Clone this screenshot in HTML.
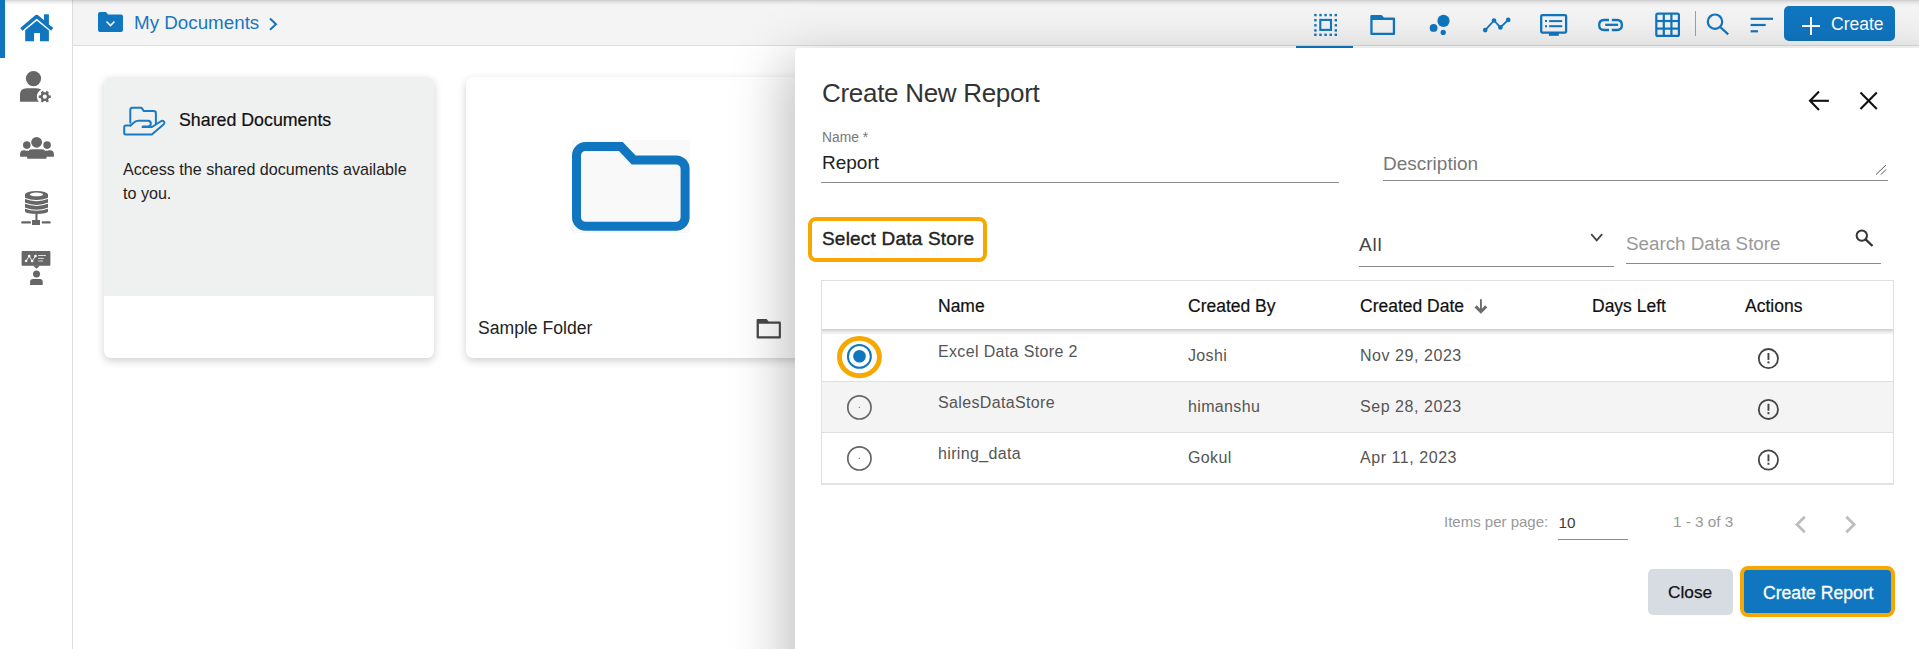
<!DOCTYPE html>
<html><head><meta charset="utf-8">
<style>
*{box-sizing:border-box;margin:0;padding:0}
html,body{width:1919px;height:649px;overflow:hidden;background:#fff;font-family:"Liberation Sans",sans-serif;position:relative}
.abs{position:absolute}
.t{position:absolute;white-space:nowrap;line-height:1}
svg{position:absolute;overflow:visible}
#side{left:0;top:0;width:73px;height:649px;background:#fff;border-right:1px solid #dcdcdc}
#topbar{left:73px;top:0;width:1846px;height:46px;background:#f4f4f4;border-bottom:1px solid #dddddd}
#topshadow{left:5px;top:0;width:1914px;height:6px;background:linear-gradient(rgba(0,0,0,.17),rgba(0,0,0,.08) 30%,rgba(0,0,0,.02) 70%,rgba(0,0,0,0))}
.card{position:absolute;border-radius:7px;box-shadow:0 3px 9px rgba(0,0,0,.19);overflow:hidden;background:#fff}
#panel{left:795px;top:48px;width:1184px;height:700px;background:#fff;border-top-left-radius:4px;box-shadow:-22px 0 50px -12px rgba(0,0,0,.25)}
.hd{font-size:17.5px;color:#111;-webkit-text-stroke:0.2px #111}
.cell{font-size:16px;color:#555;letter-spacing:0.35px}
</style></head><body>
<!-- sidebar -->
<div class="abs" id="side"></div>
<div class="abs" style="left:0;top:0;width:5px;height:58px;background:#0f75bc"></div>
<svg style="left:0;top:0" width="73" height="300" viewBox="0 0 73 300">
  <!-- home -->
  <g fill="#1076c0">
    <polyline points="21.3,29.4 36.75,16.4 52.2,29.4" fill="none" stroke="#1076c0" stroke-width="3.4" stroke-linejoin="round"/>
    <rect x="44" y="14.3" width="4.9" height="10"/>
    <path d="M25.2,30.3 L36.75,20.7 L48.9,30.6 V41.3 H40 V32.9 H34.1 V41.3 H25.2 Z"/>
  </g>
  <!-- user gear -->
  <g fill="#666">
    <circle cx="33.5" cy="78.6" r="7.6"/>
    <path d="M20,101.8 V94.5 Q20,88.2 27,88.2 H36 Q40,88.2 42,90 V101.8 Z"/>
    <circle cx="44.8" cy="96.7" r="7.9" fill="#fff"/>
    <circle cx="44.8" cy="96.7" r="4.4"/>
    <g stroke="#666" stroke-width="2.6">
      <line x1="38.8" y1="96.7" x2="50.8" y2="96.7"/>
      <line x1="41.8" y1="91.5" x2="47.8" y2="101.9"/>
      <line x1="47.8" y1="91.5" x2="41.8" y2="101.9"/>
    </g>
    <circle cx="44.8" cy="96.7" r="2.1" fill="#fff"/>
  </g>
  <!-- group -->
  <g fill="#666">
    <path d="M20.1,156.7 V154 Q20.1,150.2 24,150.2 H50 Q53.9,150.2 53.9,154 V156.7 H46.3 V158.6 H27.4 V156.7 Z"/>
    <path d="M27.4,158.6 V154.5 Q27.4,149.3 32.5,149.3 H41.2 Q46.3,149.3 46.3,154.5 V158.6 Z"/>
    <path d="M25.5,150.4 Q27.4,149.6 29,150.6" fill="none" stroke="#fff" stroke-width="0.9"/>
    <path d="M48.2,150.4 Q46.3,149.6 44.7,150.6" fill="none" stroke="#fff" stroke-width="0.9"/>
    <circle cx="26.8" cy="145.1" r="4.2" fill="#fff"/>
    <circle cx="47.1" cy="145.1" r="4.2" fill="#fff"/>
    <circle cx="36.6" cy="142.3" r="5.9" fill="#fff"/>
    <circle cx="36.6" cy="142.3" r="5.4"/>
    <circle cx="26.8" cy="145.1" r="3.8"/>
    <circle cx="47.1" cy="145.1" r="3.8"/>
  </g>
  <!-- database -->
  <g fill="#666">
    <ellipse cx="36.5" cy="194.4" rx="11.5" ry="3.5"/>
    <rect x="25" y="194.4" width="23" height="17"/>
    <ellipse cx="36.5" cy="211.4" rx="11.5" ry="2.7"/>
    <rect x="35.4" y="214" width="2.1" height="6.5"/>
    <rect x="32" y="220" width="8" height="5" />
    <rect x="21.2" y="221.2" width="9.8" height="2.4" rx="1.2"/>
    <rect x="41.7" y="221.2" width="9" height="2.4" rx="1.2"/>
  </g>
  <g fill="none" stroke="#fff" stroke-width="1.1">
    <path d="M24.5,198.3 Q36.5,203 48.5,198.3"/>
    <path d="M24.5,203.1 Q36.5,207.9 48.5,203.1"/>
    <path d="M24.5,207.9 Q36.5,212.7 48.5,207.9"/>
  </g>
  <ellipse cx="36.5" cy="194.4" rx="6.6" ry="1.8" fill="#fff"/>
  <!-- presenter -->
  <g fill="#666">
    <rect x="21.6" y="251.1" width="28.8" height="14.7" rx="1"/>
    <path d="M33,265.5 L36.5,268.8 L40,265.5 Z"/>
    <circle cx="36.5" cy="274.1" r="3.5"/>
    <path d="M30.1,285 V281.5 Q30.1,279 33,279 H40 Q42.7,279 42.7,281.5 V285 Z"/>
  </g>
  <g stroke="#fff" fill="#fff">
    <polyline points="26.1,261 29.2,256.1 32.2,261 35.5,256.1" fill="none" stroke-width="0.9"/>
    <circle cx="26.1" cy="261" r="1.3" stroke="none"/>
    <circle cx="29.2" cy="256.1" r="1.3" stroke="none"/>
    <circle cx="32.2" cy="261" r="1.3" stroke="none"/>
    <circle cx="35.5" cy="256.1" r="1.3" stroke="none"/>
    <line x1="38.2" y1="255.5" x2="45.9" y2="255.5" stroke-width="0.8"/>
    <line x1="38.2" y1="258.4" x2="43.8" y2="258.4" stroke-width="0.8"/>
    <line x1="38.2" y1="261" x2="43.1" y2="261" stroke-width="1.3" stroke="#bbb"/>
  </g>
</svg>

<!-- top bar -->
<div class="abs" id="topbar"></div>
<div class="abs" id="topshadow"></div>
<svg style="left:0;top:0" width="300" height="46">
  <path d="M98,14 Q98,12 100,12 H106 L108,14.5 H121 Q123,14.5 123,16.5 V30 Q123,32 121,32 H100 Q98,32 98,30 Z" fill="#1076c0"/>
  <polyline points="106.5,21.5 110.5,25.5 114.5,21.5" fill="none" stroke="#fff" stroke-width="1.6"/>
  <polyline points="270,18.5 276,24.2 270,29.8" fill="none" stroke="#1a73b8" stroke-width="2"/>
</svg>
<div class="t" style="left:134px;top:12.5px;font-size:18.8px;color:#1976c2;line-height:20px">My Documents</div>

<svg style="left:0;top:0" width="1919" height="50">
  <g fill="#1076c0" stroke="none">
    <!-- dashed select -->
    <g><rect x="1314.2" y="13.9" width="2.4" height="2.4"/><rect x="1314.2" y="33.6" width="2.4" height="2.4"/><rect x="1319.3" y="13.9" width="2.4" height="2.4"/><rect x="1319.3" y="33.6" width="2.4" height="2.4"/><rect x="1324.4" y="13.9" width="2.4" height="2.4"/><rect x="1324.4" y="33.6" width="2.4" height="2.4"/><rect x="1329.5" y="13.9" width="2.4" height="2.4"/><rect x="1329.5" y="33.6" width="2.4" height="2.4"/><rect x="1334.6" y="13.9" width="2.4" height="2.4"/><rect x="1334.6" y="33.6" width="2.4" height="2.4"/><rect x="1314.2" y="19.0" width="2.4" height="2.4"/><rect x="1334.6" y="19.0" width="2.4" height="2.4"/><rect x="1314.2" y="24.1" width="2.4" height="2.4"/><rect x="1334.6" y="24.1" width="2.4" height="2.4"/><rect x="1314.2" y="29.2" width="2.4" height="2.4"/><rect x="1334.6" y="29.2" width="2.4" height="2.4"/></g>
  </g>
  <g fill="none" stroke="#1076c0">
    <rect x="1320.3" y="19.9" width="10.7" height="10" stroke-width="2.1"/>
    <!-- folder -->
    <path d="M1371.4,14.9 H1381.6 L1384,17.5 H1393.9 Q1395.1,17.5 1395.1,18.7 V33.8 Q1395.1,35 1393.9,35 H1371.5 Q1370.3,35 1370.3,33.8 V16 Q1370.3,14.9 1371.4,14.9 Z M1372.6,20.1 V32.7 H1392.8 V20.1 Z" fill="#1076c0" fill-rule="evenodd" stroke="none"/>
    <!-- line chart -->
    <polyline points="1485.2,30.1 1494,20.5 1500.4,27.4 1508.2,19.9" stroke-width="1.8"/>
    <!-- monitor -->
    <rect x="1541.2" y="15.1" width="24.9" height="17.5" rx="1" stroke-width="2.3"/>
    <line x1="1549.1" y1="21.1" x2="1562.2" y2="21.1" stroke-width="2"/>
    <line x1="1549.1" y1="26.2" x2="1562.2" y2="26.2" stroke-width="2"/>
    <line x1="1545" y1="21.1" x2="1547" y2="21.1" stroke-width="2"/>
    <line x1="1545" y1="26.2" x2="1547" y2="26.2" stroke-width="2"/>
    <!-- link -->
    <path d="M1609,20 H1604 Q1599.2,20 1599.2,25 Q1599.2,30 1604,30 H1609" stroke-width="2.3"/>
    <path d="M1611.8,20 H1617 Q1621.9,20 1621.9,25 Q1621.9,30 1617,30 H1611.8" stroke-width="2.3"/>
    <line x1="1605.2" y1="24.8" x2="1618.1" y2="24.8" stroke-width="2.3"/>
    <!-- grid -->
    <rect x="1656.3" y="13.7" width="22.6" height="22.2" rx="1.5" stroke-width="2.2"/>
    <line x1="1663.8" y1="13.7" x2="1663.8" y2="35.9" stroke-width="2.2"/>
    <line x1="1671.4" y1="13.7" x2="1671.4" y2="35.9" stroke-width="2.2"/>
    <line x1="1656.3" y1="21" x2="1678.9" y2="21" stroke-width="2.2"/>
    <line x1="1656.3" y1="28.6" x2="1678.9" y2="28.6" stroke-width="2.2"/>
    <!-- search -->
    <circle cx="1715" cy="21.7" r="7.2" stroke-width="2.2"/>
    <line x1="1720" y1="26.8" x2="1728.2" y2="34.4" stroke-width="2.2"/>
    <!-- filter -->
    <line x1="1750.6" y1="18.8" x2="1773" y2="18.8" stroke-width="2.2"/>
    <line x1="1750.6" y1="25" x2="1765.7" y2="25" stroke-width="2.2"/>
    <line x1="1750.6" y1="31.3" x2="1758" y2="31.3" stroke-width="2.2"/>
  </g>
  <g fill="#1076c0">
    <circle cx="1443.5" cy="20.9" r="6.1"/>
    <circle cx="1433.6" cy="27.9" r="3.9"/>
    <circle cx="1443.2" cy="32.4" r="2.6"/>
    <circle cx="1485.2" cy="30.1" r="2.3"/>
    <circle cx="1494" cy="20.5" r="2.3"/>
    <circle cx="1500.4" cy="27.4" r="2.3"/>
    <circle cx="1508.2" cy="19.9" r="2.3"/>
    <rect x="1548.9" y="33" width="9.9" height="2.8"/>
  </g>
  <line x1="1695.5" y1="11" x2="1695.5" y2="36" stroke="#a0a0a0" stroke-width="1"/>
  <rect x="1296" y="46" width="57" height="3" fill="#1076c0"/>
</svg>
<div class="abs" style="left:1784px;top:6px;width:111px;height:35px;background:#1076c0;border-radius:5px"></div>
<svg style="left:0;top:0" width="1919" height="50">
  <line x1="1811" y1="17" x2="1811" y2="35" stroke="#fff" stroke-width="2"/>
  <line x1="1802" y1="26" x2="1820" y2="26" stroke="#fff" stroke-width="2"/>
</svg>
<div class="t" style="left:1831px;top:15px;font-size:17.5px;color:#fff;line-height:18px">Create</div>

<!-- cards -->
<div class="card" style="left:104px;top:77px;width:330px;height:281px">
  <div class="abs" style="left:0;top:0;width:330px;height:219px;background:#eff0f0"></div>
</div>
<svg style="left:0;top:0" width="200" height="140">
  <g fill="none" stroke="#1a7ac4" stroke-width="2" stroke-linejoin="round" stroke-linecap="round">
    <path d="M130.3,122.8 V110 Q130.3,107.7 132.6,107.7 H141.4 L143.9,111.1 H153.6 Q155.9,111.1 155.9,113.4 V123.4"/>
    <path d="M130.5,125.5 H125.5 Q124.2,125.5 124.2,127 V133 Q124.2,134.5 125.7,134.5 H151.8 L163.5,124.5 Q165.5,122.5 163.2,121 Q162,120.5 160.5,121.5 L152,127 H142.5"/>
    <path d="M130.5,125.5 L134,122.5 Q136,120.8 138.5,120.8 H148 Q150.8,120.8 150.8,123.5 Q150.8,126.5 148,126.5 H143"/>
  </g>
</svg>
<div class="t" style="left:179px;top:111px;font-size:17.8px;color:#111;line-height:18px;-webkit-text-stroke:0.2px #111">Shared Documents</div>
<div class="t" style="left:123px;top:157px;font-size:16.1px;color:#222;line-height:24px;white-space:normal;width:300px">Access the shared documents available to you.</div>

<div class="card" style="left:466px;top:77px;width:340px;height:281px">
  <div class="abs" style="left:106px;top:63px;width:118px;height:93px;background:#f9f9f9"></div>
</div>
<svg style="left:0;top:0" width="800" height="360">
  <path d="M576.5,155.5 A9,9 0 0 1 585.5,146.5 H620.8 L633.6,159.9 H676.1 A9,9 0 0 1 685.1,168.9 V217.3 A9,9 0 0 1 676.1,226.3 H585.5 A9,9 0 0 1 576.5,217.3 Z" fill="none" stroke="#1076c0" stroke-width="9" stroke-linejoin="miter"/>
  <path d="M756.6,320 Q756.6,318.9 757.7,318.9 H766.6 L768.7,321.6 H779.8 Q780.9,321.6 780.9,322.7 V337.5 Q780.9,338.6 779.8,338.6 H757.7 Q756.6,338.6 756.6,337.5 Z M758.9,323.8 V336.2 H778.8 V323.8 Z" fill="#4a4a4a" fill-rule="evenodd"/>
</svg>
<div class="t" style="left:478px;top:319px;font-size:17.6px;color:#222;line-height:18px">Sample Folder</div>

<!-- panel -->
<div class="abs" id="panel"></div>
<div class="t" style="left:822px;top:79.5px;font-size:26px;color:#333;line-height:26px;letter-spacing:-0.3px">Create New Report</div>
<svg style="left:0;top:0" width="1919" height="649">
  <g fill="none" stroke="#111" stroke-width="2.1">
    <line x1="1810" y1="100.8" x2="1828.9" y2="100.8"/>
    <polyline points="1819,91.5 1810,100.8 1819,110.1"/>
    <line x1="1860.5" y1="92.5" x2="1876.8" y2="109"/>
    <line x1="1876.8" y1="92.5" x2="1860.5" y2="109"/>
  </g>
</svg>
<div class="t" style="left:822px;top:131px;font-size:13.8px;color:#777;line-height:14px">Name *</div>
<div class="t" style="left:822px;top:153px;font-size:19px;color:#222;line-height:19px">Report</div>
<div class="abs" style="left:821px;top:182px;width:518px;height:1px;background:#8a8a8a"></div>
<div class="t" style="left:1383px;top:154px;font-size:19px;color:#777;line-height:19px">Description</div>
<div class="abs" style="left:1383px;top:180px;width:505px;height:1px;background:#8a8a8a"></div>
<svg style="left:0;top:0" width="1919" height="649">
  <g stroke="#555" stroke-width="1">
    <line x1="1876" y1="174.5" x2="1886" y2="165"/>
    <line x1="1881" y1="174.5" x2="1886" y2="169.5"/>
  </g>
</svg>

<div class="abs" style="left:808px;top:217px;width:179px;height:45px;border:4px solid #f6a800;border-radius:8px"></div>
<div class="t" style="left:822px;top:229px;font-size:19px;color:#222;line-height:19px;-webkit-text-stroke:0.4px #222;letter-spacing:0.2px">Select Data Store</div>

<div class="t" style="left:1359px;top:235px;font-size:19px;color:#444;line-height:19px;letter-spacing:0.8px">All</div>
<div class="abs" style="left:1359px;top:266px;width:255px;height:1px;background:#8a8a8a"></div>
<svg style="left:0;top:0" width="1919" height="649">
  <polyline points="1591.2,234.2 1596.7,240.3 1602.2,234.2" fill="none" stroke="#444" stroke-width="1.8"/>
  <circle cx="1861.8" cy="235.6" r="5.2" fill="none" stroke="#333" stroke-width="2"/>
  <line x1="1865.6" y1="239.4" x2="1872.5" y2="246" stroke="#333" stroke-width="2.4"/>
</svg>
<div class="t" style="left:1626px;top:233.5px;font-size:18.8px;color:#999;line-height:19px">Search Data Store</div>
<div class="abs" style="left:1626px;top:263px;width:255px;height:1px;background:#8a8a8a"></div>

<!-- table -->
<div class="abs" style="left:821px;top:280px;width:1073px;height:204px;border:1px solid #e0e0e0"></div>
<div class="abs" style="left:822px;top:329px;width:1071px;height:6px;background:linear-gradient(rgba(0,0,0,.2),rgba(0,0,0,.1) 40%,rgba(0,0,0,0))"></div>
<div class="abs" style="left:822px;top:381px;width:1071px;height:1px;background:#e0e0e0"></div>
<div class="abs" style="left:822px;top:382px;width:1071px;height:50px;background:#f4f4f4"></div>
<div class="abs" style="left:822px;top:432px;width:1071px;height:1px;background:#e0e0e0"></div>
<div class="abs" style="left:821px;top:484px;width:1073px;height:1px;background:#e3e3e3"></div>

<div class="t hd" style="left:938px;top:298px">Name</div>
<div class="t hd" style="left:1188px;top:298px">Created By</div>
<div class="t hd" style="left:1360px;top:298px">Created Date</div>
<div class="t hd" style="left:1592px;top:298px">Days Left</div>
<div class="t hd" style="left:1745px;top:298px">Actions</div>
<svg style="left:0;top:0" width="1919" height="649">
  <g fill="none" stroke="#6a6a6a">
    <line x1="1480.9" y1="299.2" x2="1480.9" y2="311" stroke-width="1.9"/>
    <polyline points="1475.6,306.4 1480.9,311.7 1486.2,306.4" stroke-width="2.9"/>
  </g>
  <!-- radios -->
  <ellipse cx="859.45" cy="357.05" rx="20" ry="18.65" fill="none" stroke="#f6a800" stroke-width="4.9"/>
  <circle cx="859.4" cy="356.4" r="11.45" fill="none" stroke="#1076c0" stroke-width="2"/>
  <circle cx="859.5" cy="356.3" r="6.3" fill="#1076c0"/>
  <circle cx="859.4" cy="407.4" r="11.6" fill="none" stroke="#666" stroke-width="1.7"/>
  <circle cx="859.4" cy="458.4" r="11.6" fill="none" stroke="#666" stroke-width="1.7"/>
  <circle cx="859.4" cy="407.4" r="0.7" fill="#4a90c8"/><circle cx="859.4" cy="458.4" r="0.7" fill="#4a90c8"/>
  <!-- info icons -->
  <g fill="none" stroke="#444" stroke-width="1.8">
    <circle cx="1768.4" cy="358.6" r="9.6"/>
    <circle cx="1768.4" cy="409.4" r="9.6"/>
    <circle cx="1768.4" cy="460" r="9.6"/>
  </g>
  <g fill="#444">
    <rect x="1767.5" y="353.0" width="1.9" height="6.9"/><rect x="1767.5" y="361.3" width="1.9" height="2.1"/>
    <rect x="1767.5" y="403.8" width="1.9" height="6.9"/><rect x="1767.5" y="412.1" width="1.9" height="2.1"/>
    <rect x="1767.5" y="454.4" width="1.9" height="6.9"/><rect x="1767.5" y="462.7" width="1.9" height="2.1"/>
  </g>
</svg>

<div class="t cell" style="left:938px;top:344px">Excel Data Store 2</div>
<div class="t cell" style="left:1188px;top:348px">Joshi</div>
<div class="t cell" style="left:1360px;top:348px;letter-spacing:.55px">Nov 29, 2023</div>
<div class="t cell" style="left:938px;top:395px">SalesDataStore</div>
<div class="t cell" style="left:1188px;top:398.6px">himanshu</div>
<div class="t cell" style="left:1360px;top:398.6px;letter-spacing:.55px">Sep 28, 2023</div>
<div class="t cell" style="left:938px;top:446px">hiring_data</div>
<div class="t cell" style="left:1188px;top:449.6px">Gokul</div>
<div class="t cell" style="left:1360px;top:449.6px;letter-spacing:.55px">Apr 11, 2023</div>

<!-- pagination -->
<div class="t" style="left:1444px;top:514px;font-size:15px;color:#999;line-height:15px">Items per page:</div>
<div class="t" style="left:1558.5px;top:514.5px;font-size:15.3px;color:#3a3a3a;line-height:15px">10</div>
<div class="abs" style="left:1558px;top:539px;width:70px;height:1px;background:#8a8a8a"></div>
<div class="t" style="left:1673px;top:514px;font-size:15.3px;color:#999;line-height:15px">1 - 3 of 3</div>
<svg style="left:0;top:0" width="1919" height="649">
  <g fill="none" stroke="#bdbdbd" stroke-width="2.8">
    <polyline points="1804.8,516.8 1797,524.5 1804.8,532.2"/>
    <polyline points="1846.3,516.8 1854.1,524.5 1846.3,532.2"/>
  </g>
</svg>

<!-- buttons -->
<div class="abs" style="left:1648px;top:569px;width:85px;height:46px;background:#d7dce3;border-radius:5px"></div>
<div class="t" style="left:1668px;top:583px;font-size:17.3px;color:#111;line-height:18px;-webkit-text-stroke:0.25px #111">Close</div>
<div class="abs" style="left:1740px;top:566px;width:155px;height:51px;border:4px solid #f6a800;border-radius:8px;background:#1076c0"></div>
<div class="t" style="left:1763px;top:584px;font-size:17.6px;color:#fff;line-height:18px;-webkit-text-stroke:0.3px #fff">Create Report</div>
</body></html>
